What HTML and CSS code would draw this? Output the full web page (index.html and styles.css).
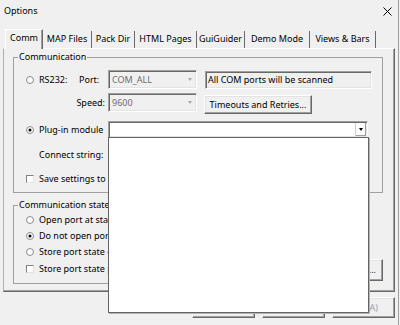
FILE: index.html
```html
<!DOCTYPE html>
<html>
<head>
<meta charset="utf-8">
<title>Options</title>
<link rel="stylesheet" href="styles.css">
</head>
<body>
<div class="dialog">
  <div class="titlebar">
    <span class="title">Options</span>
    <svg class="close" width="9" height="9" viewBox="0 0 9 9"><path d="M0.5 0.5L8.5 8.5M8.5 0.5L0.5 8.5" stroke="#000" stroke-width="1" fill="none"/></svg>
  </div>
  <div class="tabs">
    <div class="tab active">Comm</div>
    <div class="tab">MAP Files</div>
    <div class="tab">Pack Dir</div>
    <div class="tab">HTML Pages</div>
    <div class="tab">GuiGuider</div>
    <div class="tab">Demo Mode</div>
    <div class="tab">Views &amp; Bars</div>
  </div>
  <div class="panel">
    <fieldset class="group g1">
      <legend>Communication</legend>
      <div class="row r1">
        <span class="radio"></span>
        <span class="lbl w-rs">RS232:</span>
        <span class="lbl w-port">Port:</span>
        <div class="combo disabled w-small"><span class="ctext">COM_ALL</span><span class="arrow"></span></div>
        <div class="textbox">All COM ports will be scanned</div>
      </div>
      <div class="row r2">
        <span class="lbl speed">Speed:</span>
        <div class="combo disabled w-small"><span class="ctext">9600</span><span class="arrow"></span></div>
        <div class="btn timeouts">Timeouts and Retries...</div>
      </div>
      <div class="row r3">
        <span class="radio on"></span>
        <span class="lbl w-plug">Plug-in module</span>
        <div class="combo white w-wide"><span class="ctext"></span><span class="arrow abtn"></span></div>
      </div>
      <div class="row r4">
        <span class="lbl">Connect string:</span>
      </div>
      <div class="row r5">
        <span class="check"></span>
        <span class="lbl">Save settings to file</span>
      </div>
    </fieldset>
    <div class="lower">
      <fieldset class="group g2">
        <legend>Communication state</legend>
        <div class="row srow first">
          <span class="radio"></span>
          <span class="lbl">Open port at startup</span>
        </div>
        <div class="row srow">
          <span class="radio on"></span>
          <span class="lbl">Do not open port at startup</span>
        </div>
        <div class="row srow">
          <span class="radio"></span>
          <span class="lbl">Store port state on exit</span>
        </div>
        <div class="row srow last">
          <span class="check"></span>
          <span class="lbl">Store port state per project</span>
        </div>
      </fieldset>
      <div class="btn more">Settings...</div>
    </div>
  </div>
  <div class="buttons">
    <div class="btn dbtn">确定</div>
    <div class="btn dbtn">取消</div>
    <div class="btn dbtn off">应用(A)</div>
  </div>
  <div class="droplist"></div>
</div>
</body>
</html>
```

FILE: styles.css
```css
* { box-sizing: border-box; }
body {
  margin: 0;
  background: #f0f0f0;
  font-family: "Noto Sans", "Noto Sans CJK SC", sans-serif;
  font-size: 9px;
  line-height: 12px;
  color: #000;
}
.dialog {
  position: relative;
  width: 399px;
  height: 325px;
  border-right: 1px solid #a0a0a0;
  overflow: hidden;
}
.titlebar {
  height: 22px;
  display: flex;
  align-items: center;
  justify-content: space-between;
  padding: 0 6px 0 4px;
}
.close { display: block; }

.tabs {
  display: flex;
  align-items: flex-end;
  height: 19px;
  margin: 7px 0 0 5px;
  position: relative;
  z-index: 1;
}
.tab {
  height: 17px;
  border-right: 1px solid #696969;
  display: flex;
  align-items: center;
  justify-content: center;
  padding-bottom: 1px;
  white-space: nowrap;
}
.tab.active {
  height: 20px;
  margin-bottom: -1px;
  background: #f0f0f0;
  border-left: 1px solid #fff;
  border-top: 1px solid #fff;
  box-shadow: inset -1px 0 #a0a0a0;
  padding-bottom: 3px;
}
.tab:nth-child(1) { width: 38px; }
.tab:nth-child(2) { width: 49px; }
.tab:nth-child(3) { width: 43px; }
.tab:nth-child(4) { width: 62px; }
.tab:nth-child(5) { width: 48px; }
.tab:nth-child(6) { width: 65px; }
.tab:nth-child(7) { width: 66px; }

.panel {
  margin-left: 3px;
  width: 392px;
  height: 244px;
  border: 1px solid;
  border-color: #fff #696969 #696969 #b0b0b0;
  box-shadow: inset -1px -1px #a0a0a0;
  padding-top: 1px;
}
fieldset.group {
  border: 1px solid #a0a0a0;
  padding: 0;
  margin: 0;
  min-width: 0;
}
legend {
  padding: 0 1px;
  margin-left: 4px;
  line-height: 12px;
  white-space: nowrap;
}
fieldset.g1 { margin: 1px 0 0 9px; width: 370px; }
.row { display: flex; align-items: center; white-space: nowrap; }
.lbl { line-height: 16px; }
.radio {
  flex: none;
  position: relative;
  width: 8px;
  height: 8px;
  border-radius: 50%;
  border: 1px solid #8e8e8e;
  background: #fbfbfb;
  margin-right: 5px;
}
.radio.on::after {
  content: "";
  position: absolute;
  left: 2px;
  top: 2px;
  width: 2px;
  height: 2px;
  border-radius: 50%;
  background: #000;
  box-shadow: 0 0 0 0.5px #000;
}
.check {
  flex: none;
  width: 8px;
  height: 8px;
  border: 1px solid;
  border-color: #808080 #e3e3e3 #e3e3e3 #808080;
  background: #fff;
  margin-right: 5px;
}
.r1 { height: 19px; margin-top: 7px; padding-left: 12px; align-items: flex-start; }
.r1 .radio { margin-top: 6px; }
.r1 .lbl { line-height: 19px; }
.w-rs { width: 40px; }
.w-port { width: 29px; }
.w-plug { width: 69px; }
.combo {
  display: flex;
  align-items: center;
  border: 1px solid;
  border-color: #a0a0a0 #fff #fff #a0a0a0;
  box-shadow: inset 1px 1px #696969, inset -1px -1px #e3e3e3;
  padding: 1px 2px 1px 3px;
}
.combo .ctext { flex: 1; }
.combo.disabled { background: #f0f0f0; color: #6d6d6d; }
.w-small { width: 89px; height: 19px; }
.combo.white { background: #fff; }
.w-wide { width: 260px; height: 17px; padding-right: 1px; }
.arrow {
  width: 9px;
  height: 100%;
  display: flex;
  align-items: center;
  justify-content: center;
}
.arrow::after {
  content: "";
  border-left: 2.5px solid transparent;
  border-right: 2.5px solid transparent;
  border-top: 3px solid #a8a8a8;
}
.abtn {
  width: 11px;
  background: #fdfdfd;
  border-left: 1px solid #d0d0d0;
  box-shadow: inset -1px -1px #a0a0a0;
}
.abtn::after { border-top-color: #000; }
.textbox {
  margin: 1px 0 0 8px;
  width: 167px;
  height: 18px;
  border: 1px solid;
  border-color: #a0a0a0 #fff #fff #a0a0a0;
  box-shadow: inset 1px 1px #696969, inset -1px -1px #e3e3e3;
  background: #f0f0f0;
  padding-left: 2px;
  line-height: 16px;
}
.r2 { height: 21px; margin-top: 4px; align-items: flex-start; padding-left: 12px; }
.speed { width: 82px; text-align: right; padding-right: 3px; line-height: 19px; }
.btn {
  display: flex;
  align-items: center;
  justify-content: center;
  background: #f0f0f0;
  border: 1px solid;
  border-color: #fff #696969 #696969 #fff;
  box-shadow: inset -1px -1px #a0a0a0, inset 1px 1px #e3e3e3;
  white-space: nowrap;
}
.timeouts { width: 108px; height: 19px; margin: 2px 0 0 7px; }
.r3 { height: 17px; margin-top: 7px; padding-left: 12px; }
.r4 { height: 16px; margin-top: 9px; padding-left: 25px; }
.r5 { height: 16px; margin-top: 8px; margin-bottom: 5px; padding-left: 12px; }

.lower {
  display: flex;
  justify-content: space-between;
  align-items: flex-end;
  margin: 6px 0 0 9px;
  width: 370px;
}
.g2 { width: 280px; }
.srow { height: 16px; padding-left: 12px; }
.srow.first { margin-top: 1px; }
.srow.last { margin-top: 1px; margin-bottom: 6px; }
.more {
  width: 80px;
  height: 22px;
  margin-bottom: 3px;
  justify-content: flex-end;
  padding-right: 6px;
  color: #333;
}

.buttons {
  display: flex;
  justify-content: flex-end;
  gap: 7px;
  margin-top: 5px;
  padding-right: 3px;
}
.dbtn { width: 63px; height: 21px; }
.dbtn.off { color: #a0a0a0; }

.droplist {
  position: absolute;
  left: 108px;
  top: 137px;
  width: 261px;
  height: 176px;
  background: #fff;
  border: 1px solid #646464;
  box-shadow: 1px 1px 0 #b4b4b4;
  z-index: 5;
}
```
